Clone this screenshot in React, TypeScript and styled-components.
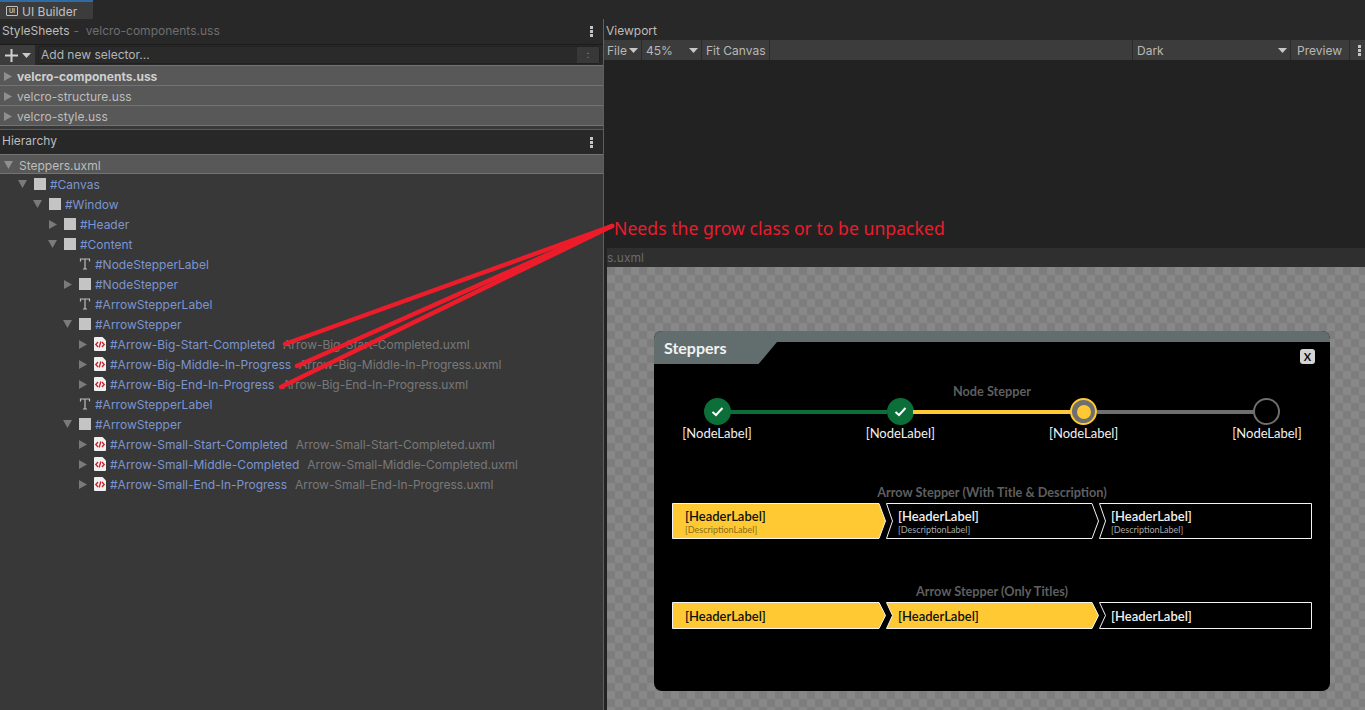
import React from 'react';
import styled, { createGlobalStyle } from 'styled-components';

const GlobalStyle = createGlobalStyle`
    html, body {
        margin: 0;
        padding: 0;
        height: 100%;
        background: #282828;
    }
    #root {
        height: 100%;
    }
`;

const Page = styled.div`
    position: relative;
    width: 1365px;
    height: 710px;
    overflow: hidden;
    display: flex;
    flex-direction: column;
    background: #282828;
    font-family: Inter, 'Liberation Sans', sans-serif;
    font-size: 12px;
    color: #bdbdbd;
`;

const TabBar = styled.div`
    height: 19px;
    flex: none;
    display: flex;
    background: #282828;
`;

const Tab = styled.div`
    width: 93px;
    box-sizing: border-box;
    border-top: 2px solid #2f6ba5;
    background: #3c3c3c;
    display: flex;
    align-items: center;
    gap: 4px;
    padding: 1px 0 0 6px;
    color: #c0c0c0;
    font-size: 12px;
`;

const UiBadge = styled.span`
    width: 10px;
    height: 8px;
    border: 1px solid #c0c0c0;
    border-radius: 1px;
    font-size: 6px;
    line-height: 8px;
    font-weight: 700;
    text-align: center;
`;

const Panes = styled.div`
    flex: 1;
    display: flex;
    min-height: 0;
`;

const LeftPane = styled.div`
    width: 603px;
    flex: none;
    display: flex;
    flex-direction: column;
    background: #383838;
`;

const Divider = styled.div`
    width: 1px;
    flex: none;
    background: #5f5f5f;
`;

const PaneHeader = styled.div<{ $height: number }>`
    height: ${(p) => p.$height}px;
    flex: none;
    box-sizing: border-box;
    display: flex;
    align-items: center;
    justify-content: space-between;
    padding: 0 10px 0 2px;
    background: #282828;
    color: #bcbcbc;
`;

const PaneTitle = styled.span<{ $lift: number }>`
    margin-top: ${(p) => p.$lift}px;
`;

const Subtitle = styled.span`
    color: #6f6f6f;
    margin-left: 4px;
`;

const Kebab = styled.span`
    display: flex;
    flex-direction: column;
    gap: 1px;
    i {
        width: 3px;
        height: 3px;
        background: #c4c4c4;
    }
`;

const SelectorBar = styled.div`
    height: 21px;
    flex: none;
    box-sizing: border-box;
    display: flex;
    background: #282828;
    border-top: 1px solid #1b1b1b;
`;

const AddButton = styled.div`
    width: 35px;
    flex: none;
    background: #3c3c3c;
    display: flex;
    align-items: center;
    justify-content: center;
    gap: 4px;
`;

const SelectorInput = styled.div`
    flex: 1;
    margin: 1px 3px 1px 3px;
    box-sizing: border-box;
    border: 1px solid #212121;
    border-radius: 3px;
    background: #2a2a2a;
    color: #b4b4b4;
    display: flex;
    justify-content: space-between;
    align-items: center;
    padding: 0 0 2px 2px;
`;

const InputHint = styled.span`
    width: 22px;
    align-self: stretch;
    margin-bottom: -2px;
    background: #383838;
    color: #8a8a8a;
    font-size: 10px;
    text-align: center;
    line-height: 15px;
`;

const SheetRow = styled.div<{ $bold?: boolean; $open?: boolean }>`
    height: 20px;
    flex: none;
    box-sizing: border-box;
    border-top: 1px solid #737373;
    border-bottom: ${(p) => (p.$open ? '1px solid #737373' : 'none')};
    background: #585858;
    display: flex;
    align-items: center;
    gap: ${(p) => (p.$open ? 6 : 5)}px;
    padding: 2px 0 0 4px;
    color: ${(p) => (p.$bold ? '#cfcfcf' : '#bdbdbd')};
    font-weight: ${(p) => (p.$bold ? 700 : 400)};
`;

const SheetsEnd = styled.div`
    height: 5px;
    flex: none;
    box-sizing: border-box;
    border-top: 1px solid #737373;
    border-bottom: 1px solid #5a5a5a;
    background: #383838;
`;

const Tree = styled.div`
    flex: 1;
`;

const TreeRow = styled.div<{ $depth: number }>`
    height: 20px;
    display: flex;
    align-items: center;
    padding-left: ${(p) => 18 + p.$depth * 15}px;
    white-space: nowrap;
`;

const Toggle = styled.span<{ $closed: boolean }>`
    width: 16px;
    flex: none;
    box-sizing: border-box;
    padding-left: ${(p) => (p.$closed ? 1 : 0)}px;
    display: flex;
`;

const ElementBox = styled.span`
    width: 12px;
    height: 12px;
    flex: none;
    margin-right: 4px;
    background: #c4c4c4;
`;

const ElementName = styled.span`
    color: #7c95cf;
`;

const TemplateName = styled.span`
    color: #787878;
    margin-left: 8px;
    letter-spacing: -0.05px;
`;

const RightPane = styled.div`
    flex: 1;
    display: flex;
    flex-direction: column;
    min-width: 0;
    background: #222222;
`;

const ViewportToolbar = styled.div`
    height: 20px;
    flex: none;
    display: flex;
    gap: 1px;
    background: #2a2a2a;
`;

const ToolbarItem = styled.div<{ $width?: number; $pad?: number }>`
    ${(p) => (p.$width ? `width: ${p.$width}px; flex: none;` : 'flex: 1;')}
    box-sizing: border-box;
    background: #3c3c3c;
    display: flex;
    align-items: center;
    justify-content: space-between;
    padding: 0 3px 0 ${(p) => p.$pad ?? 4}px;
    color: #b8b8b8;
    white-space: nowrap;
`;

const ViewportBlank = styled.div`
    height: 188px;
    flex: none;
`;

const DocumentBar = styled.div`
    height: 19px;
    flex: none;
    margin-left: 3px;
    background: #2f2f2f;
    color: #6b6b6b;
    line-height: 19px;
`;

const CanvasArea = styled.div`
    flex: 1;
    margin-left: 3px;
    padding: 64px 35px 0 47px;
    background-color: #7d7d7d;
    background-image: conic-gradient(#888888 25%, #7d7d7d 0 50%, #888888 0 75%, #7d7d7d 0);
    background-size: 16px 16px;
`;

const StepperWindow = styled.div`
    position: relative;
    width: 676px;
    height: 360px;
    box-sizing: border-box;
    padding: 11px 0 0;
    border-radius: 8px;
    overflow: hidden;
    background: #000;
    font-family: Lato, 'Liberation Sans', sans-serif;
    &::before {
        content: '';
        position: absolute;
        left: 0;
        right: 0;
        top: 0;
        height: 11px;
        background: #626e6e;
    }
`;

const WindowTab = styled.div`
    width: 123px;
    height: 22px;
    box-sizing: border-box;
    padding-left: 10px;
    background: #626e6e;
    clip-path: polygon(0 0, 100% 0, 85% 100%, 0 100%);
    color: #f2f2f2;
    font-size: 16px;
    font-weight: 700;
    line-height: 11px;
`;

const CloseButton = styled.div`
    position: absolute;
    top: 18px;
    right: 15px;
    width: 15px;
    height: 15px;
    border-radius: 3px;
    background: #d4d4d4;
    color: #111;
    font-size: 11px;
    font-weight: 700;
    line-height: 15px;
    text-align: center;
`;

const SectionLabel = styled.div<{ $top: number }>`
    margin-top: ${(p) => p.$top}px;
    height: 16px;
    line-height: 16px;
    color: #5f5f5f;
    font-size: 12.7px;
    font-weight: 700;
    text-align: center;
`;

const NodeTrack = styled.div`
    display: grid;
    grid-template-columns: 36px 1fr 36px 1fr 36px 1fr 36px;
    padding: 0 45px;
    margin-top: -1px;
    align-items: start;
`;

const NodeCell = styled.div`
    display: flex;
    flex-direction: column;
    align-items: center;
    width: 36px;
    white-space: nowrap;
    color: #f0f0f0;
    font-size: 13px;
    line-height: 16px;
`;

const NodeCircle = styled.div<{ $kind: 'done' | 'active' | 'todo' }>`
    width: 27px;
    height: 27px;
    box-sizing: border-box;
    border-radius: 50%;
    display: flex;
    align-items: center;
    justify-content: center;
    background: ${(p) => (p.$kind === 'done' ? '#0c6e38' : p.$kind === 'active' ? '#6f6f6f' : '#000')};
    border: 2px solid
        ${(p) => (p.$kind === 'done' ? '#0c6e38' : p.$kind === 'active' ? '#ffc933' : '#6f6f6f')};
`;

const NodeDot = styled.span`
    width: 14px;
    height: 14px;
    border-radius: 50%;
    background: #ffc933;
`;

const NodeLine = styled.div<{ $color: string }>`
    height: 4px;
    margin: 12px -5px 0;
    background: ${(p) => p.$color};
`;

const ArrowRow = styled.div<{ $height: number; $top: number }>`
    display: grid;
    grid-template-columns: 214px 213px 213px;
    height: ${(p) => p.$height}px;
    margin: ${(p) => p.$top}px 18px 0;
`;

const ArrowStep = styled.div<{ $filled: boolean; $first?: boolean }>`
    position: relative;
    display: flex;
    flex-direction: column;
    justify-content: center;
    padding: 1px 0 0 ${(p) => (p.$first ? 13 : 12)}px;
    color: ${(p) => (p.$filled ? '#111' : '#f0f0f0')};
    svg {
        position: absolute;
        left: 0;
        top: 0;
    }
`;

const HeaderLabel = styled.span`
    position: relative;
    font-size: 13px;
    font-weight: 600;
    line-height: 15px;
`;

const DescriptionLabel = styled.span<{ $filled: boolean }>`
    position: relative;
    font-size: 9px;
    line-height: 11px;
    color: ${(p) => (p.$filled ? '#8a6d16' : '#a8a8a8')};
`;

const Annotation = styled.div`
    position: absolute;
    left: 614px;
    top: 216px;
    color: #ea1c2d;
    font-family: 'Noto Sans', sans-serif;
    font-size: 17.65px;
    line-height: 24px;
    white-space: nowrap;
`;

const Strokes = styled.svg`
    position: absolute;
    left: 0;
    top: 0;
    pointer-events: none;
`;

const Caret = ({ open = false, color = '#8f8f8f' }: { open?: boolean; color?: string }) =>
    open ? (
        <svg width="9" height="8" viewBox="0 0 9 8">
            <path d="M0 0H9L4.5 8Z" fill={color} />
        </svg>
    ) : (
        <svg width="8" height="9" viewBox="0 0 8 9">
            <path d="M0 0V9L8 4.5Z" fill={color} />
        </svg>
    );

const SmallCaret = () => (
    <svg width="9" height="5" viewBox="0 0 9 5">
        <path d="M0 0H9L4.5 5Z" fill="#c8c8c8" />
    </svg>
);

const Dots = () => (
    <Kebab>
        <i />
        <i />
        <i />
    </Kebab>
);

const TextIcon = () => (
    <svg width="12" height="12" viewBox="0 0 12 12" style={{ marginRight: 4, flex: 'none' }}>
        <path d="M1.5 3.5V1H10.500V3.500M6 1V11M4 11H8" fill="none" stroke="#bdbdbd" strokeWidth="1.200" />
    </svg>
);

const TemplateIcon = () => (
    <svg width="12" height="14" viewBox="0 0 12 14" style={{ marginRight: 4, flex: 'none' }}>
        <path d="M1 0H8.500L12 3.500V13a1 1 0 0 1-1 1H1a1 1 0 0 1-1-1V1a1 1 0 0 1 1-1Z" fill="#f0f0f0" />
        <path d="M4 5L1.800 7.500L4 10M8 5L10.200 7.500L8 10M6.800 4.500L5.200 10.500" fill="none" stroke="#c8202a" strokeWidth="1.300" />
    </svg>
);

const Check = () => (
    <svg width="13" height="11" viewBox="0 0 13 11">
        <path d="M1.500 6L5 9L11.500 2" fill="none" stroke="#fff" strokeWidth="2" />
    </svg>
);

type TreeItem = {
    depth: number;
    kind: 'box' | 'text' | 'template';
    toggle?: 'open' | 'closed';
    name: string;
    template?: string;
};

const treeItems: TreeItem[] = [
    { depth: 0, kind: 'box', toggle: 'open', name: '#Canvas' },
    { depth: 1, kind: 'box', toggle: 'open', name: '#Window' },
    { depth: 2, kind: 'box', toggle: 'closed', name: '#Header' },
    { depth: 2, kind: 'box', toggle: 'open', name: '#Content' },
    { depth: 3, kind: 'text', name: '#NodeStepperLabel' },
    { depth: 3, kind: 'box', toggle: 'closed', name: '#NodeStepper' },
    { depth: 3, kind: 'text', name: '#ArrowStepperLabel' },
    { depth: 3, kind: 'box', toggle: 'open', name: '#ArrowStepper' },
    { depth: 4, kind: 'template', toggle: 'closed', name: '#Arrow-Big-Start-Completed', template: 'Arrow-Big-Start-Completed.uxml' },
    { depth: 4, kind: 'template', toggle: 'closed', name: '#Arrow-Big-Middle-In-Progress', template: 'Arrow-Big-Middle-In-Progress.uxml' },
    { depth: 4, kind: 'template', toggle: 'closed', name: '#Arrow-Big-End-In-Progress', template: 'Arrow-Big-End-In-Progress.uxml' },
    { depth: 3, kind: 'text', name: '#ArrowStepperLabel' },
    { depth: 3, kind: 'box', toggle: 'open', name: '#ArrowStepper' },
    { depth: 4, kind: 'template', toggle: 'closed', name: '#Arrow-Small-Start-Completed', template: 'Arrow-Small-Start-Completed.uxml' },
    { depth: 4, kind: 'template', toggle: 'closed', name: '#Arrow-Small-Middle-Completed', template: 'Arrow-Small-Middle-Completed.uxml' },
    { depth: 4, kind: 'template', toggle: 'closed', name: '#Arrow-Small-End-In-Progress', template: 'Arrow-Small-End-In-Progress.uxml' },
];

const Arrow = ({
    width,
    height,
    first,
    last,
    filled,
    description,
}: {
    width: number;
    height: number;
    first?: boolean;
    last?: boolean;
    filled: boolean;
    description?: boolean;
}) => {
    const r = last ? width - 0.5 : width - 7;
    const mid = height / 2;
    const points = [
        '0.5,0.5',
        `${r},0.5`,
        ...(last ? [] : [`${width - 0.5},${mid}`]),
        `${r},${height - 0.5}`,
        `0.5,${height - 0.5}`,
        ...(first ? [] : [`6.5,${mid}`]),
    ].join(' ');
    return (
        <ArrowStep $filled={filled} $first={first}>
            <svg width={width} height={height} viewBox={`0 0 ${width} ${height}`}>
                <polygon points={points} fill={filled ? '#ffc933' : '#000'} stroke="#f4f4f4" strokeWidth="1" />
            </svg>
            <HeaderLabel>[HeaderLabel]</HeaderLabel>
            {description && <DescriptionLabel $filled={filled}>[DescriptionLabel]</DescriptionLabel>}
        </ArrowStep>
    );
};

const App = () => {
    return (
        <Page>
            <GlobalStyle />
            <TabBar>
                <Tab>
                    <UiBadge>UI</UiBadge>
                    UI Builder
                </Tab>
            </TabBar>
            <Panes>
                <LeftPane>
                    <PaneHeader $height={25}>
                        <PaneTitle $lift={-2}>
                            StyleSheets
                            <Subtitle>- &nbsp;velcro-components.uss</Subtitle>
                        </PaneTitle>
                        <Dots />
                    </PaneHeader>
                    <SelectorBar>
                        <AddButton>
                            <svg width="13" height="13" viewBox="0 0 13 13">
                                <path d="M6.500 0V13M0 6.500H13" stroke="#d0d0d0" strokeWidth="2" />
                            </svg>
                            <SmallCaret />
                        </AddButton>
                        <SelectorInput>
                            Add new selector...
                            <InputHint>:</InputHint>
                        </SelectorInput>
                    </SelectorBar>
                    <SheetRow $bold>
                        <Caret />
                        velcro-components.uss
                    </SheetRow>
                    <SheetRow>
                        <Caret />
                        velcro-structure.uss
                    </SheetRow>
                    <SheetRow>
                        <Caret />
                        velcro-style.uss
                    </SheetRow>
                    <SheetsEnd />
                    <PaneHeader $height={24}>
                        <PaneTitle $lift={-4}>Hierarchy</PaneTitle>
                        <Dots />
                    </PaneHeader>
                    <SheetRow $open>
                        <Caret open />
                        Steppers.uxml
                    </SheetRow>
                    <Tree>
                        {treeItems.map((item, i) => (
                            <TreeRow key={i} $depth={item.depth}>
                                <Toggle $closed={item.toggle === 'closed'}>
                                    {item.toggle && <Caret open={item.toggle === 'open'} color="#7a7a7a" />}
                                </Toggle>
                                {item.kind === 'box' && <ElementBox />}
                                {item.kind === 'text' && <TextIcon />}
                                {item.kind === 'template' && <TemplateIcon />}
                                <ElementName>{item.name}</ElementName>
                                {item.template && <TemplateName>{item.template}</TemplateName>}
                            </TreeRow>
                        ))}
                    </Tree>
                </LeftPane>
                <Divider />
                <RightPane>
                    <PaneHeader $height={21}>
                        <PaneTitle $lift={2}>Viewport</PaneTitle>
                    </PaneHeader>
                    <ViewportToolbar>
                        <ToolbarItem $width={37} $pad={3}>
                            File
                            <SmallCaret />
                        </ToolbarItem>
                        <ToolbarItem $width={59}>
                            45%
                            <SmallCaret />
                        </ToolbarItem>
                        <ToolbarItem $width={67}>Fit Canvas</ToolbarItem>
                        <ToolbarItem />
                        <ToolbarItem $width={157}>
                            Dark
                            <SmallCaret />
                        </ToolbarItem>
                        <ToolbarItem $width={58} $pad={6}>
                            Preview
                        </ToolbarItem>
                        <ToolbarItem $width={15} $pad={8}>
                            <Dots />
                        </ToolbarItem>
                    </ViewportToolbar>
                    <ViewportBlank />
                    <DocumentBar>s.uxml</DocumentBar>
                    <CanvasArea>
                        <StepperWindow>
                            <WindowTab>Steppers</WindowTab>
                            <CloseButton>X</CloseButton>
                            <SectionLabel $top={19}>Node Stepper</SectionLabel>
                            <NodeTrack>
                                <NodeCell>
                                    <NodeCircle $kind="done">
                                        <Check />
                                    </NodeCircle>
                                    [NodeLabel]
                                </NodeCell>
                                <NodeLine $color="#0c6e38" />
                                <NodeCell>
                                    <NodeCircle $kind="done">
                                        <Check />
                                    </NodeCircle>
                                    [NodeLabel]
                                </NodeCell>
                                <NodeLine $color="#ffc933" />
                                <NodeCell>
                                    <NodeCircle $kind="active">
                                        <NodeDot />
                                    </NodeCircle>
                                    [NodeLabel]
                                </NodeCell>
                                <NodeLine $color="#6f6f6f" />
                                <NodeCell>
                                    <NodeCircle $kind="todo" />
                                    [NodeLabel]
                                </NodeCell>
                            </NodeTrack>
                            <SectionLabel $top={43}>Arrow Stepper (With Title &amp; Description)</SectionLabel>
                            <ArrowRow $height={36} $top={3}>
                                <Arrow width={214} height={36} first filled description />
                                <Arrow width={213} height={36} filled={false} description />
                                <Arrow width={213} height={36} last filled={false} description />
                            </ArrowRow>
                            <SectionLabel $top={44}>Arrow Stepper (Only Titles)</SectionLabel>
                            <ArrowRow $height={27} $top={3}>
                                <Arrow width={214} height={27} first filled />
                                <Arrow width={213} height={27} filled />
                                <Arrow width={213} height={27} last filled={false} />
                            </ArrowRow>
                        </StepperWindow>
                    </CanvasArea>
                </RightPane>
            </Panes>
            <Strokes width="1365" height="710" viewBox="0 0 1365 710">
                <g fill="none" stroke="#ed1c2a" strokeWidth="4.500" strokeLinecap="round">
                    <path d="M612 226L285 344" />
                    <path d="M612 226L297 366" />
                    <path d="M612 226L281 387" />
                </g>
            </Strokes>
            <Annotation>Needs the grow class or to be unpacked</Annotation>
        </Page>
    );
};

export default App;
